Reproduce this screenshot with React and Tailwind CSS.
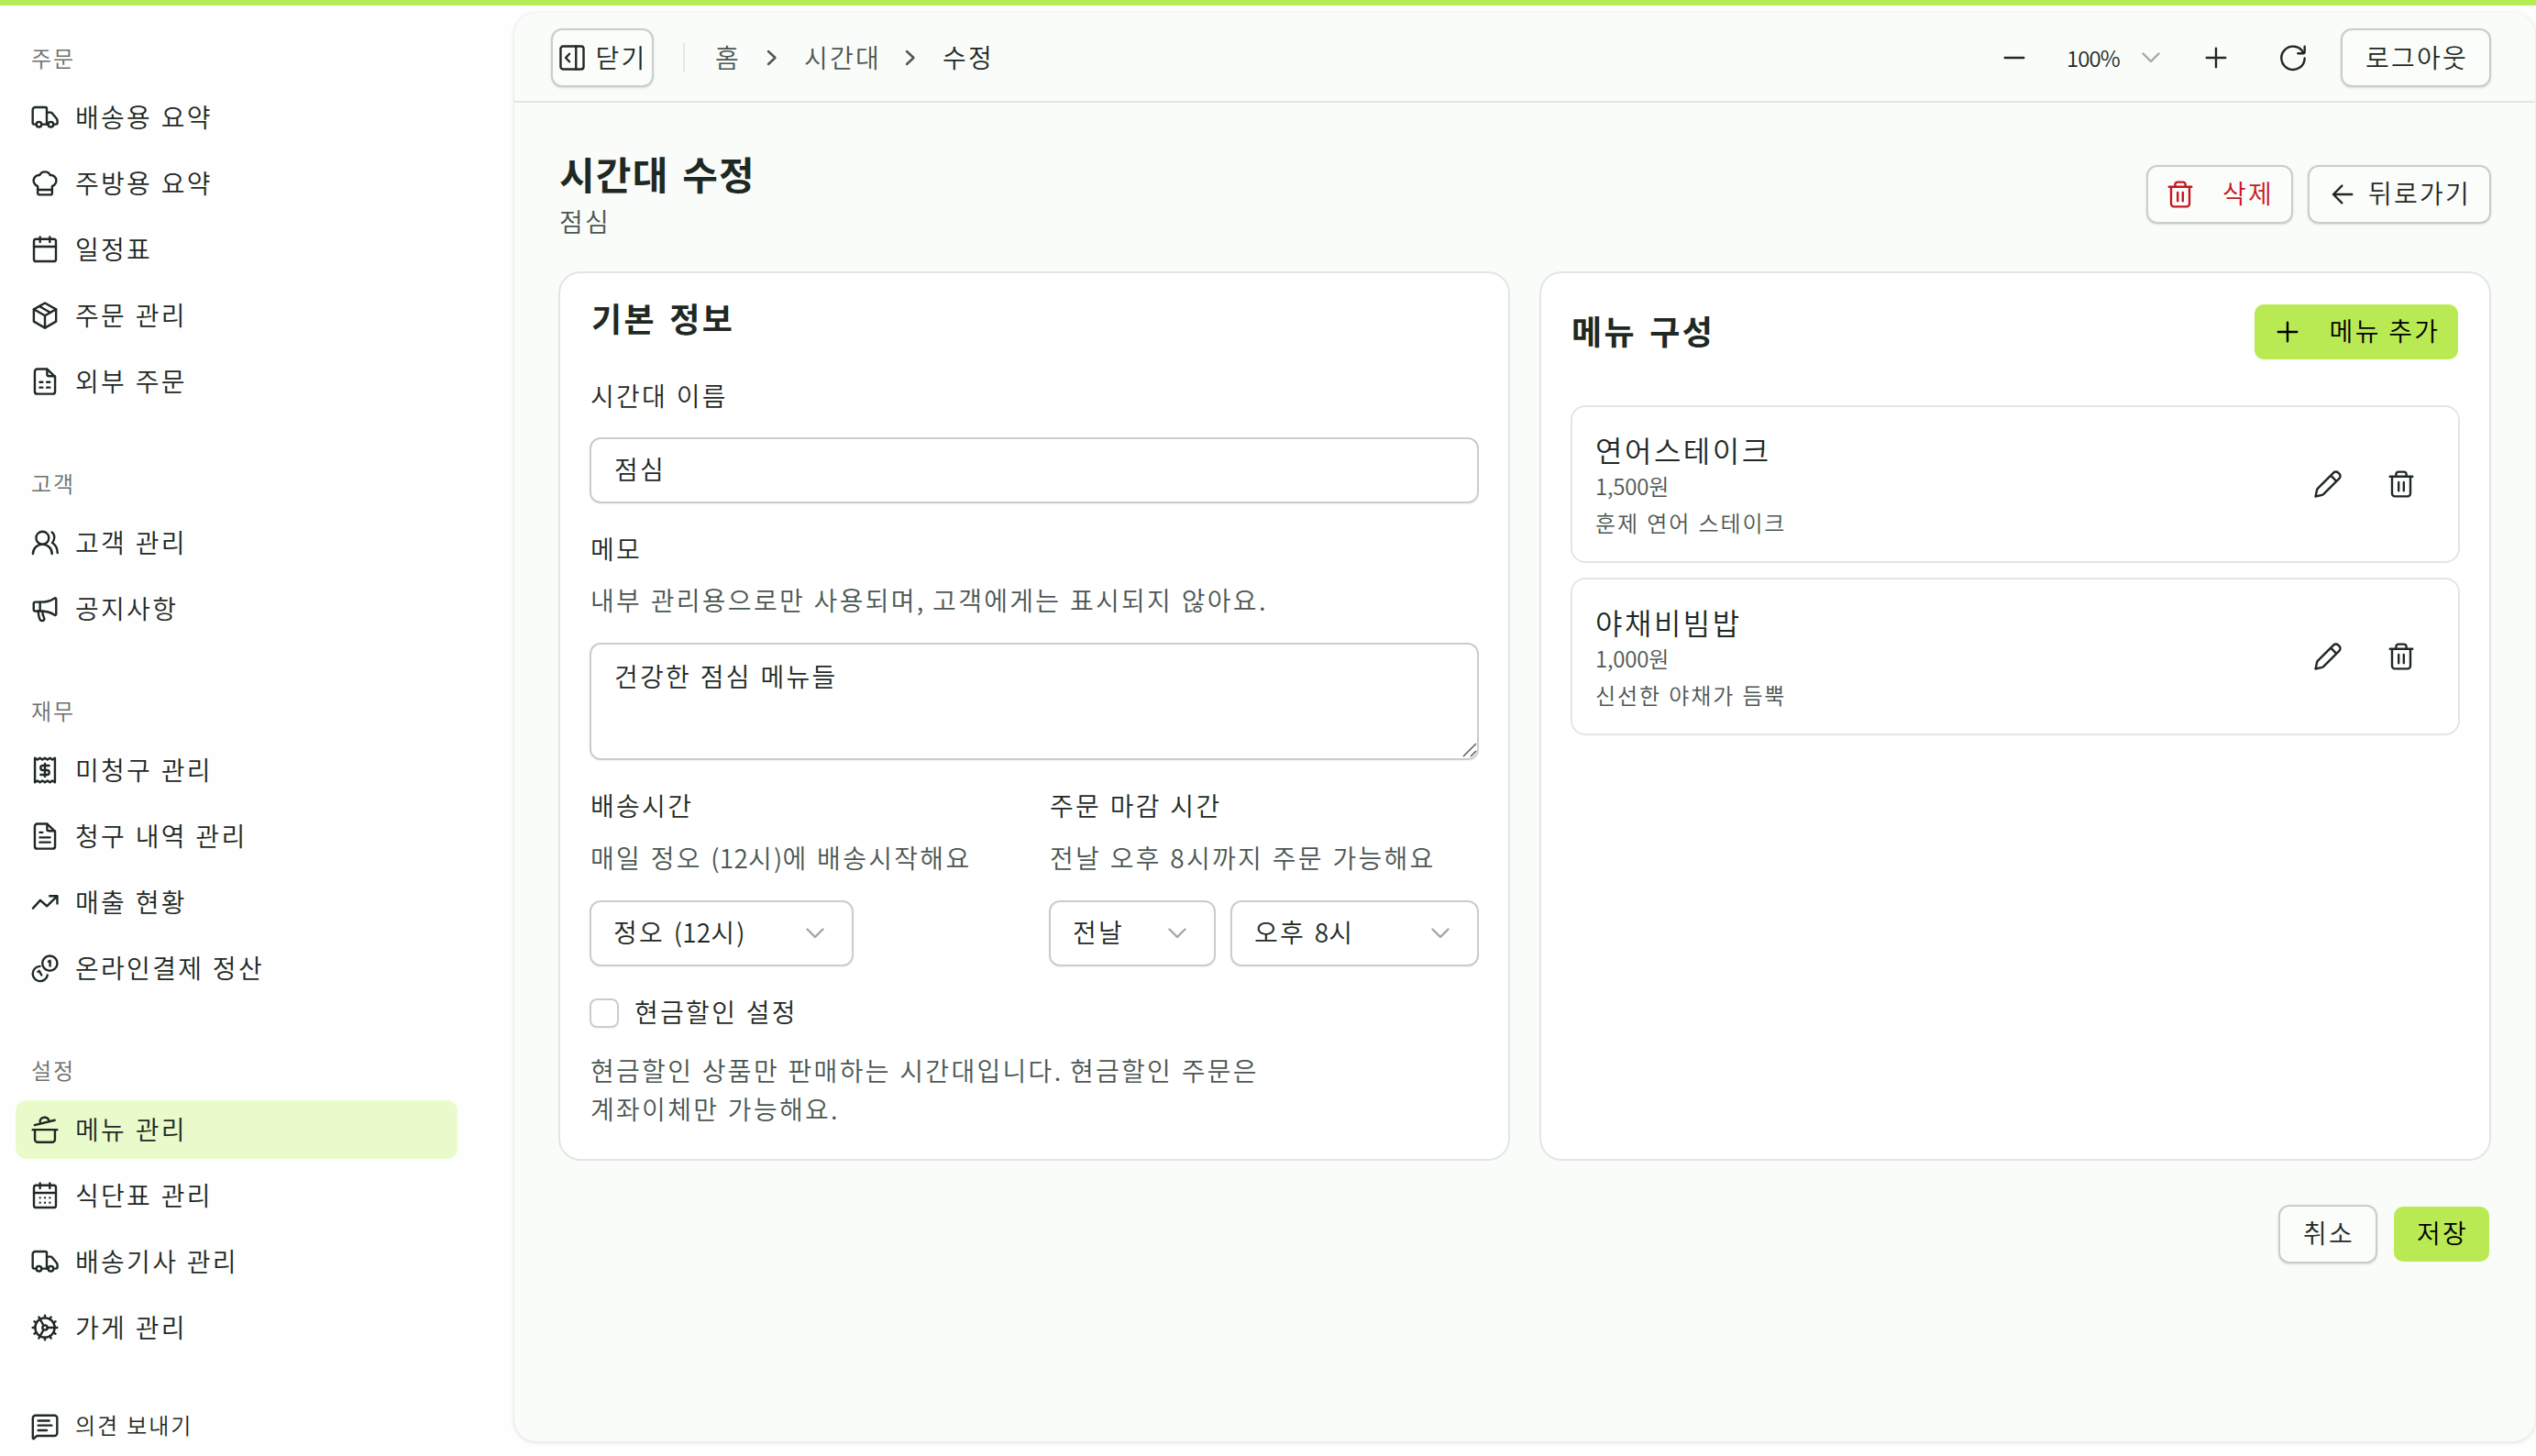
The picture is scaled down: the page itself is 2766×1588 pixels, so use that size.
import React from 'react';

function Icon({ children, className = 'size-8' }) {
  return (
    <svg
      viewBox="0 0 24 24"
      fill="none"
      stroke="currentColor"
      strokeWidth="1.8"
      strokeLinecap="round"
      strokeLinejoin="round"
      className={`shrink-0 ${className}`}
    >
      {children}
    </svg>
  );
}

const TruckIcon = () => (
  <Icon>
    <path d="M5 17.75H3.2a1.2 1.2 0 0 1-1.2-1.2V5.75a2 2 0 0 1 2-2h8.5a1 1 0 0 1 1 1v13" />
    <path d="M9.25 17.75h5.25M13.5 8h3.2a1.5 1.5 0 0 1 1.2.6l3.6 4.4a3 3 0 0 1 .7 1.9v1.65a1.2 1.2 0 0 1-1.2 1.2H19" />
    <circle cx="7.1" cy="17.75" r="2.1" />
    <circle cx="16.8" cy="17.75" r="2.1" />
  </Icon>
);

const ChefHatIcon = () => (
  <Icon>
    <path d="M6.1 14.3v5.8a1.2 1.2 0 0 0 1.2 1.2h9.4a1.2 1.2 0 0 0 1.2-1.2v-5.8c2-.8 3.400-2.600 3.400-4.700a4.500 4.500 0 0 0-5-4.300 4.700 4.700 0 0 0-8.600 0 4.500 4.500 0 0 0-5 4.300c0 2.100 1.400 3.900 3.400 4.700z" />
    <path d="M6.1 17.2h11.8" />
  </Icon>
);

const CalendarIcon = ({ dots }) => (
  <Icon>
    <rect x="3" y="3.6" width="18" height="18.2" rx="1.8" />
    <path d="M3 9.7h18M8 1.8V6M16 1.8V6" />
    {dots && <path d="M8 13.75h.01M12 13.75h.01M16 13.75h.01M8 17.75h.01M12 17.75h.01M16 17.75h.01" />}
  </Icon>
);

const PackageIcon = () => (
  <Icon>
    <path d="M12 1.9L21.1 7v10L12 22.2 2.9 17V7z" />
    <path d="M2.9 7L12 12.25 21.1 7M12 12.25v9.95M7.4 4.5l9.2 5.2" />
  </Icon>
);

const FileIcon = ({ children }) => (
  <Icon>
    <path d="M13.8 1.9H5.7a2 2 0 0 0-2 2v16.3a2 2 0 0 0 2 2h12.6a2 2 0 0 0 2-2V8.2z" />
    <path d="M13.8 2v4.2a1.5 1.5 0 0 0 1.5 1.5h4.7" />
    {children}
  </Icon>
);

const OrderFileIcon = () => (
  <FileIcon>
    <path d="M7.8 12.6h2.2M13.6 12.6h2.4M7.8 17h2.2M13.6 17h2.4" />
  </FileIcon>
);

const InvoiceIcon = () => (
  <FileIcon>
    <path d="M7.8 8.9h2.2M7.8 13h8.4M7.8 17h8.4" />
  </FileIcon>
);

const UsersIcon = () => (
  <Icon>
    <circle cx="10" cy="8" r="5.2" />
    <path d="M2.2 21a7.8 7.8 0 0 1 15.6 0M17.7 3.3c2.6 1.9 2.7 6 .3 8.7 2.8 1.7 4.2 4.8 4.3 8.3" />
  </Icon>
);

const MegaphoneIcon = () => (
  <Icon>
    <path d="M2.8 7.800a1.300 1.300 0 0 1 1.300-1.300h4.200c4.200 0 8-.7 11.300-3 .9-.6 1.600-.3 1.600.7v12c0 1-.7 1.300-1.600.7-3.300-2.300-7.100-3-11.300-3H4.100a1.300 1.300 0 0 1-1.300-1.300z" />
    <path d="M8 6.500v7.400M6.300 14l.9 4.500c.4 2 1 3.300 2.400 3.300 1.600 0 2.400-1.300 1.700-2.500-.9-1.500-1.300-3-1.300-5.200" />
  </Icon>
);

const ReceiptIcon = () => (
  <Icon>
    <path d="M3.8 2l2.050 1.400L7.900 2l2.050 1.400L12 2l2.050 1.400L16.100 2l2.050 1.400L20.200 2v20l-2.050-1.400L16.100 22l-2.050-1.400L12 22l-2.050-1.400L7.900 22l-2.050-1.400L3.800 22z" />
    <path d="M15.500 8.300H10.300a1.850 1.850 0 0 0 0 3.700h3.400a1.850 1.850 0 0 1 0 3.700H8.500M12 6.800v10.400" />
  </Icon>
);

const TrendIcon = () => (
  <Icon>
    <path d="M2.2 17l6-6.600 5.400 4.800L22 7M15.900 6.900h6.200v6.200" />
  </Icon>
);

const CoinsIcon = () => (
  <Icon>
    <circle cx="16" cy="8" r="6.1" />
    <path d="M14.900 6.600l1.300-.7v4.200M7.900 10.400a6.100 6.100 0 1 0 6.200 7.200M6.300 14.900l1-.7 1.900 3.400" />
  </Icon>
);

const PotIcon = () => (
  <Icon>
    <path d="M2 12.100h20M3.800 12.100v7.900a2.300 2.300 0 0 0 2.300 2.300h11.800a2.300 2.300 0 0 0 2.300-2.300v-7.900M3.600 8.300L20 4.300M8.200 7.100c-.8-2.600.2-4.500 3-5 2.300-.4 3.800.7 4.100 3.200" />
  </Icon>
);

const GearIcon = () => (
  <Icon>
    <circle cx="12" cy="12" r="8" />
    <circle cx="12" cy="12" r="2" />
    <path d="M14 12h6M11 10.300L8 5.100M11 13.700L8 18.900" />
    {[0, 30, 60, 90, 120, 150, 180, 210, 240, 270, 300, 330].map((deg) => (
      <path key={deg} d="M20 12h2" transform={`rotate(${deg} 12 12)`} />
    ))}
  </Icon>
);

const CommentIcon = () => (
  <Icon>
    <path d="M2.1 21.100V5a2.200 2.200 0 0 1 2.200-2.200h15.500A2.200 2.200 0 0 1 22 5v12.300a2.200 2.200 0 0 1-2.200 2.200H6.300c-.9 0-1.300.2-1.900.8l-1.100 1.300c-.5.500-1.200.3-1.200-.5z" />
    <path d="M6.500 7.100h9M6.500 11h11M6.500 15h7" />
  </Icon>
);

const PanelIcon = () => (
  <Icon>
    <rect x="2.6" y="2.6" width="18.8" height="18.8" rx="2" />
    <path d="M15.2 2.600v18.800M9.800 8.800L6.800 12l3 3.200" />
  </Icon>
);

const TrashIcon = () => (
  <Icon>
    <path d="M2.8 5.800h18.400M4.500 5.800v13.900a2.300 2.300 0 0 0 2.300 2.300h10.400a2.300 2.300 0 0 0 2.300-2.300V5.800M7.800 5.500V3.900A1.900 1.900 0 0 1 9.700 2h4.600a1.900 1.900 0 0 1 1.900 1.900v1.600M9.900 10.500v7M14.100 10.500v7" />
  </Icon>
);

const PencilIcon = () => (
  <Icon>
    <path d="M1.9 22.100l1.200-5.400c.1-.5.400-.9.700-1.200L16.600 2.700a2.700 2.700 0 0 1 3.900 0l.8.800a2.700 2.700 0 0 1 0 3.900L8.500 20.200c-.3.300-.7.600-1.200.7zM14.400 5l4.600 4.600" />
  </Icon>
);

const PlusIcon = () => (
  <Icon>
    <path d="M12 4.300v15.400M4.300 12h15.400" />
  </Icon>
);

const MinusIcon = () => (
  <Icon>
    <path d="M4.300 12h15.400" />
  </Icon>
);

const ArrowLeftIcon = () => (
  <Icon>
    <path d="M4.500 12h15.200M11.500 4.900L4.500 12l7 7.100" />
  </Icon>
);

const RefreshIcon = () => (
  <Icon>
    <path d="M21.500 2.800v4.700a.9.900 0 0 1-.9.900H16M20.600 8.200A9.500 9.500 0 1 0 21.500 12.300" />
  </Icon>
);

const ChevronRight = () => (
  <svg viewBox="0 0 12 18" fill="none" stroke="currentColor" strokeWidth="2.4" strokeLinecap="round" strokeLinejoin="round" className="h-[18px] w-3 shrink-0 text-[#4b5652]">
    <path d="M2 2l7.500 7L2 16" />
  </svg>
);

const ChevronDown = () => (
  <svg viewBox="0 0 20 12" fill="none" stroke="currentColor" strokeWidth="2.4" strokeLinecap="round" strokeLinejoin="round" className="h-3 w-5 shrink-0 text-[#a3a9a6]">
    <path d="M1.500 1.500L10 10l8.500-8.500" />
  </svg>
);

// digits and punctuation are set tighter than the hangul around them
const Tight = ({ children }) => <span className="tracking-[0.2px]">{children}</span>;

const groups = [
  {
    title: '주문',
    items: [
      { label: '배송용 요약', icon: <TruckIcon /> },
      { label: '주방용 요약', icon: <ChefHatIcon /> },
      { label: '일정표', icon: <CalendarIcon /> },
      { label: '주문 관리', icon: <PackageIcon /> },
      { label: '외부 주문', icon: <OrderFileIcon /> },
    ],
  },
  {
    title: '고객',
    items: [
      { label: '고객 관리', icon: <UsersIcon /> },
      { label: '공지사항', icon: <MegaphoneIcon /> },
    ],
  },
  {
    title: '재무',
    items: [
      { label: '미청구 관리', icon: <ReceiptIcon /> },
      { label: '청구 내역 관리', icon: <InvoiceIcon /> },
      { label: '매출 현황', icon: <TrendIcon /> },
      { label: '온라인결제 정산', icon: <CoinsIcon /> },
    ],
  },
  {
    title: '설정',
    items: [
      { label: '메뉴 관리', icon: <PotIcon />, active: true },
      { label: '식단표 관리', icon: <CalendarIcon dots /> },
      { label: '배송기사 관리', icon: <TruckIcon /> },
      { label: '가게 관리', icon: <GearIcon /> },
    ],
  },
];

const menus = [
  { name: '연어스테이크', price: '1,500원', desc: '훈제 연어 스테이크' },
  { name: '야채비빔밥', price: '1,000원', desc: '신선한 야채가 듬뿍' },
];

function Sidebar() {
  return (
    <aside className="w-[561px] shrink-0 pl-[17px] pt-[26px]">
      <nav className="flex flex-col gap-12">
        {groups.map((group) => (
          <div key={group.title}>
            <div className="flex h-16 items-center pl-[17px] text-2xl tracking-[1.9px] text-[#6b706e]">
              <span className="pb-0.5">{group.title}</span>
            </div>
            <ul className="flex w-[482px] flex-col gap-2">
              {group.items.map((item) => (
                <li
                  key={item.label}
                  className={`flex h-16 items-center gap-[17px] rounded-xl px-4 ${item.active ? 'bg-[#eafbcb]' : ''}`}
                >
                  {item.icon}
                  <span className="pb-[3px]">{item.label}</span>
                </li>
              ))}
            </ul>
          </div>
        ))}
      </nav>
      <div className="mt-11 flex h-16 items-center gap-[17px] pl-4 text-2xl tracking-[1.9px]">
        <CommentIcon />
        <span className="pb-1">의견 보내기</span>
      </div>
    </aside>
  );
}

function OutlineButton({ className = '', children }) {
  return (
    <button
      className={`flex h-16 shrink-0 items-center justify-center rounded-xl border-2 border-[#c9cdcb] bg-[#fbfdfa] shadow-sm ${className}`}
    >
      {children}
    </button>
  );
}

function PrimaryButton({ className = '', children }) {
  return (
    <button
      className={`flex h-16 shrink-0 items-center justify-center rounded-xl border-2 border-transparent bg-[#b9ea54] bg-clip-padding text-black ${className}`}
    >
      {children}
    </button>
  );
}

function Select({ children, className = '' }) {
  return (
    <div
      className={`flex h-[72px] items-center justify-between rounded-xl border-2 border-[#c9cdcb] pl-6 pr-[30px] shadow-xs ${className}`}
    >
      <span className="pb-1">{children}</span>
      <ChevronDown />
    </div>
  );
}

function Header() {
  return (
    <header className="flex h-[98px] items-center border-b-2 border-[#e2e6e4] pl-10 pr-12 pt-0.5">
      <OutlineButton className="w-28 gap-[9px]">
        <PanelIcon />
        <span className="pb-[3px]">닫기</span>
      </OutlineButton>
      <div className="ml-8 h-8 w-0.5 bg-[#e2e6e4]" />
      <nav className="ml-[33px] flex items-center text-[#4b5652]">
        <span className="w-[56px] pb-[3px]">홈</span>
        <ChevronRight />
        <span className="ml-[29px] w-[110px] pb-[3px]">시간대</span>
        <ChevronRight />
        <span className="ml-[29px] pb-[3px] text-[#1f2924]">수정</span>
      </nav>
      <div className="ml-auto flex items-center">
        <div className="flex size-16 items-center justify-center">
          <MinusIcon />
        </div>
        <div className="flex w-[156px] items-center justify-between pl-[25px] pr-[29px] text-2xl tracking-[-0.9px]">
          100%
          <ChevronDown />
        </div>
        <div className="flex size-16 items-center justify-center">
          <PlusIcon />
        </div>
        <div className="ml-5 flex size-16 items-center justify-center">
          <RefreshIcon />
        </div>
        <OutlineButton className="ml-5 w-[164px]">
          <span className="pb-[3px] pl-0.5">로그아웃</span>
        </OutlineButton>
      </div>
    </header>
  );
}

function BasicInfo() {
  return (
    <section className="rounded-3xl border-2 border-[#e2e6e4] bg-white p-8 pt-[30px]">
      <h2 className="pl-0.5 text-[36px] font-bold leading-[36px] tracking-[2.3px] [word-spacing:4px]">기본 정보</h2>
      <div className="mt-[46px] h-[42px] pl-px leading-[42px]">시간대 이름</div>
      <div className="mt-[25px] flex h-[72px] items-center rounded-xl border-2 border-[#c9cdcb] pl-[25px] shadow-xs">
        <span className="pb-1">점심</span>
      </div>
      <div className="mt-7 h-[42px] pl-px leading-[42px]">메모</div>
      <div className="mt-3.5 h-[42px] pl-px leading-[42px] text-[#4b5652]">
        내부 관리용으로만 사용되며<Tight>,</Tight> 고객에게는 표시되지 않아요<Tight>.</Tight>
      </div>
      <div className="relative mt-[26px]">
        <textarea
          className="block h-32 w-full resize-none rounded-xl border-2 border-[#c9cdcb] px-[25px] py-[13px] leading-[42px] shadow-xs [word-spacing:inherit]"
          defaultValue="건강한 점심 메뉴들"
        />
        <svg viewBox="0 0 16 16" stroke="#5f6462" strokeWidth="1.6" className="absolute bottom-[3px] right-0.5 size-4">
          <path d="M1 15L15 1M9 15l6-6" />
        </svg>
      </div>
      <div className="mt-7 grid grid-cols-2 gap-x-8">
        <div>
          <div className="h-[42px] pl-px leading-[42px]">배송시간</div>
          <div className="mt-[15px] h-[42px] pl-px leading-[42px] text-[#4b5652]">
            매일 정오 <Tight>(12</Tight>시<Tight>)</Tight>에 배송시작해요
          </div>
          <Select className="mt-[26px] w-72">
            정오 <Tight>(12</Tight>시<Tight>)</Tight>
          </Select>
        </div>
        <div>
          <div className="h-[42px] pl-px leading-[42px]">주문 마감 시간</div>
          <div className="mt-[15px] h-[42px] pl-px leading-[42px] text-[#4b5652]">전날 오후 8시까지 주문 가능해요</div>
          <div className="mt-[26px] flex gap-4">
            <Select className="w-[182px]">전날</Select>
            <Select className="flex-1">
              오후 <Tight>8</Tight>시
            </Select>
          </div>
        </div>
      </div>
      <div className="mt-[30px] flex h-[42px] items-center gap-[17px]">
        <span className="size-8 rounded-lg border-2 border-[#c9cdcb] shadow-xs" />
        <span className="pb-1">현금할인 설정</span>
      </div>
      <p className="mt-5 pb-0.5 pl-px leading-[42px] text-[#4b5652]">
        현금할인 상품만 판매하는 시간대입니다<Tight>.</Tight> 현금할인 주문은
        <br />
        계좌이체만 가능해요<Tight>.</Tight>
      </p>
    </section>
  );
}

function MenuList() {
  return (
    <section className="rounded-3xl border-2 border-[#e2e6e4] bg-white p-8">
      <div className="flex items-center justify-between">
        <h2 className="pb-1 pl-px text-[36px] font-bold leading-[40px] tracking-[2.3px] [word-spacing:4px]">메뉴 구성</h2>
        <PrimaryButton className="w-[226px] gap-[30px]">
          <PlusIcon />
          <span className="pb-1">메뉴 추가</span>
        </PrimaryButton>
      </div>
      <ul className="mt-12 flex flex-col gap-4">
        {menus.map((menu) => (
          <li
            key={menu.name}
            className="flex h-[172px] items-center rounded-2xl border-2 border-[#e2e6e4] pl-[25px] pr-[46px]"
          >
            <div className="flex flex-1 flex-col pt-1">
              <span className="text-[32px] leading-[40px] tracking-[2.5px]">{menu.name}</span>
              <span className="text-2xl leading-[40px] tracking-[-0.2px] text-[#4b5652]">{menu.price}</span>
              <span className="text-2xl leading-[40px] tracking-[1.9px] text-[#4b5652]">{menu.desc}</span>
            </div>
            <div className="flex gap-12">
              <PencilIcon />
              <TrashIcon />
            </div>
          </li>
        ))}
      </ul>
    </section>
  );
}

export default function App() {
  return (
    <div className="h-[1588px] w-[2766px] overflow-hidden border-t-[6px] border-[#b5ec56] bg-[#fefefe] font-['Noto_Sans_CJK_KR',sans-serif] text-[28px] font-[350] leading-[42px] tracking-[2.3px] text-[#1f2924] [word-spacing:1px]">
      <div className="flex">
        <Sidebar />
        <main className="mb-4 mr-px mt-2 h-[1558px] flex-1 rounded-3xl bg-[#fafcf9] shadow-[0_1px_5px_rgba(0,0,0,0.14)]">
          <Header />
          <div className="px-12 pt-12">
            <div className="flex h-[104px] items-center justify-between">
              <div>
                <h1 className="pl-px text-[42px] font-bold leading-[54px] tracking-[1.2px] [word-spacing:4px]">시간대 수정</h1>
                <div className="pl-px pt-1 text-[#4b5652]">점심</div>
              </div>
              <div className="flex gap-4">
                <OutlineButton className="w-40 gap-[30px] text-[#c9151f]">
                  <TrashIcon />
                  <span className="pb-1">삭제</span>
                </OutlineButton>
                <OutlineButton className="w-[200px] gap-3">
                  <ArrowLeftIcon />
                  <span className="pb-1">뒤로가기</span>
                </OutlineButton>
              </div>
            </div>
            <div className="mt-8 grid h-[970px] grid-cols-2 gap-8">
              <BasicInfo />
              <MenuList />
            </div>
            <div className="mt-12 flex justify-end gap-4">
              <OutlineButton className="w-[108px]">
                <span className="pb-1 pl-0.5">취소</span>
              </OutlineButton>
              <PrimaryButton className="w-[108px]">
                <span className="pb-1 pl-0.5">저장</span>
              </PrimaryButton>
            </div>
          </div>
        </main>
      </div>
    </div>
  );
}
